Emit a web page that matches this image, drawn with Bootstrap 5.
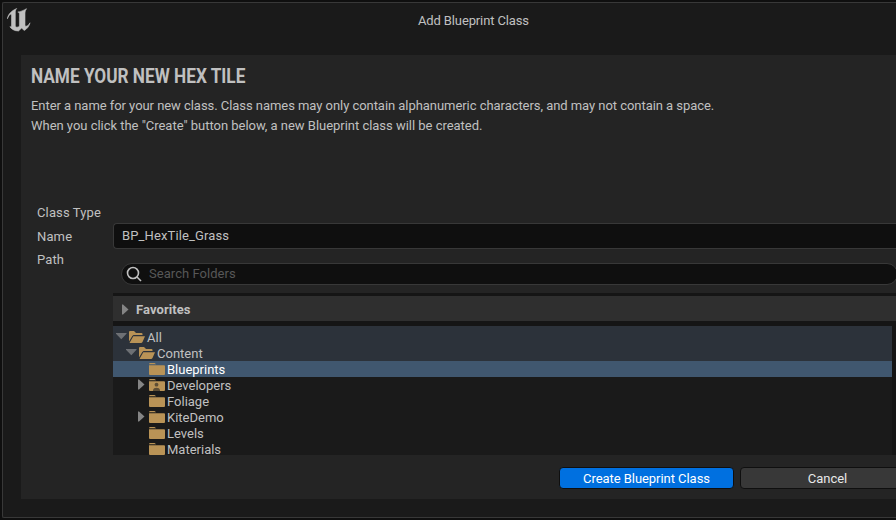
<!DOCTYPE html>
<html lang="en">
<head>
<meta charset="utf-8">
<title>Add Blueprint Class</title>
<link href="https://cdn.jsdelivr.net/npm/bootstrap@5.3.0/dist/css/bootstrap.min.css" rel="stylesheet">
<style>
body{background:#0f0f0f;color:#c0c0c0;font-family:Roboto,"Liberation Sans",sans-serif;font-size:13px;line-height:16px;letter-spacing:.13px;height:520px}
.window{margin:2px 0 0 2px;height:516px;width:894px;background:#1a1a1a;border:1px solid #383838;border-right:0;border-radius:2px 0 0 2px}
.titlebar{height:52px;padding:5px 0 0 4px}
.logo{width:24px;height:24px}
.caption{margin-left:387px;margin-top:5px;letter-spacing:-.13px}
.panel{margin-left:18px;height:444px;background:#242424}
.heading{font-size:21px;line-height:24px;font-weight:700;letter-spacing:0;transform:scaleX(.82);transform-origin:left;margin:9px 0 0 10px;white-space:nowrap;width:max-content}
.intro{line-height:20px;margin:8px 0 0 10px;white-space:nowrap;letter-spacing:-.05px}
.intro-second{letter-spacing:-.025px}
.form-zone{height:263px;margin-top:69px}
.labels{width:92px;padding-left:16px}
.label-row{height:24px}
.label-row + .label-row{height:23px}
.form-fields{padding-top:18px}
.name-box{height:26px;background:#0f0f0f;border:1px solid #383838;border-right:0;border-radius:4px 0 0 4px;padding:4px 8px}
.search-box{height:22px;width:777px;margin:14px 0 8px 8px;background:#0f0f0f;border:1px solid #383838;border-radius:11px;color:#575757;padding-left:4px;gap:7px;letter-spacing:.04px}
.picker-list{background:#151515;padding-top:3px}
.fav{height:25px;background:#2f2f2f;margin-bottom:5px;padding:3px 0 0 6px;gap:4px;letter-spacing:.08px}
.tree{width:779px;height:129px;background:#1a1a1a}
.tree-row{height:16px;line-height:17px;white-space:nowrap;letter-spacing:0}
.level-0{padding-left:2px}
.level-1{padding-left:12px}
.level-2{padding-left:22px}
.parent-rows{background:#2c323a;padding-top:3px}
.chosen{background:#40576f;color:#fff}
.tw{width:13px;height:16px;flex:none}
.fd{width:18px;height:16px;flex:none;margin-right:1px}
.footer-buttons{padding-left:538px;gap:6px;margin-top:-1px}
.ue-btn,.ue-btn:hover{height:22px;border:1px solid #0f0f0f;border-radius:4px;font-size:13px;line-height:16px;padding:3px 0 1px;color:#fff;letter-spacing:-.05px;flex:none;width:175px}
.ue-create,.ue-create:hover{background:#0070e0}
.ue-cancel,.ue-cancel:hover{background:#383838;color:#e8e8e8}
</style>
</head>
<body class="overflow-hidden m-0">
<svg class="d-none">
  <symbol id="right" viewBox="0 0 13 16"><path d="M3 2.500v10h1l5.500-5L4 2.500z" fill="#858585"/></symbol>
  <symbol id="down" viewBox="0 0 13 16"><path d="M1 4h10.500v.8l-5.200 5.400L1 4.800z" fill="#6d7074"/></symbol>
  <symbol id="closed" viewBox="0 0 18 16"><path d="M1 3.200Q1 2 2.200 2H6.500l1.700 1.200H1zM1 4.200h15q1 0 1 1V13q0 1-1 1H2q-1 0-1-1z" fill="#b99356"/></symbol>
  <symbol id="open" viewBox="0 0 18 16"><path d="M1 12.500V3q0-1 1-1h4l2 2h5.500q1 0 1 1v1H5.500L4.300 7z" fill="#b99356"/><path d="M1.500 14L5.300 7.200H17L14.500 13q-.4 1-1.500 1z" fill="#b99356"/></symbol>
  <symbol id="person" viewBox="0 0 18 16"><use href="#closed" width="18" height="16"/><circle cx="8.500" cy="7.700" r="1.900" fill="#5e4e35"/><path d="M5 14v-1.300Q5.500 10.700 8.500 10.700T12 12.700V14z" fill="#5e4e35"/></symbol>
</svg>
<main class="window">
  <header class="titlebar d-flex align-items-start">
    <svg class="logo" viewBox="0 0 24 24"><path d="M.4 10.800C1 6.500 4 3 9.700.5 8.400 2 8.300 3.200 8.300 5v12.200c0 1.300.7 2 1.600 2 1 0 1.900-.4 2.500-1.200V6.200c0-1.500-.5-2-1.600-2.100C13.500 3.600 16.500 2.500 19.500.7 18 3 18 4.500 18 6v10.700c0 1 .4 1.500 1.200 1.500 1.400 0 2.800-1.600 3.800-3.400-.8 3.700-3.200 6.400-5.900 7.700L14.700 20l-3.200 3C7 22.900 4.500 21 2.900 18.700c1.100.4 1.600 0 1.600-1.700V8.200c0-1.500-.4-2-1.200-1.800C2.200 6.800 1.200 8.700.4 10.800z" fill="#c0c0c0" stroke="#c0c0c0" stroke-width=".6"/></svg>
    <span class="caption">Add Blueprint Class</span>
  </header>
  <section class="panel overflow-hidden">
    <h1 class="heading">NAME YOUR NEW HEX TILE</h1>
    <p class="intro mb-0">Enter a name for your new class. Class names may only contain alphanumeric characters, and may not contain a space.<br><span class="intro-second">When you click the "Create" button below, a new Blueprint class will be created.</span></p>
    <div class="form-zone d-flex">
      <div class="labels flex-shrink-0">
        <div class="label-row">Class Type</div><div class="label-row">Name</div><div class="label-row">Path</div>
      </div>
      <div class="form-fields flex-grow-1 overflow-hidden">
        <div class="name-box">BP_HexTile_Grass</div>
        <div class="search-box d-flex align-items-center"><svg width="16" height="16" viewBox="0 0 16 16" fill="none" stroke="#c0c0c0" stroke-width="1.600"><circle cx="7" cy="7" r="5.500"/><path d="M11 11l4 4"/></svg><span>Search Folders</span></div>
        <div class="picker-list">
          <div class="fav d-flex align-items-center fw-bold"><svg class="tw"><use href="#right"/></svg>Favorites</div>
          <div class="tree overflow-hidden">
            <div class="parent-rows">
              <div class="tree-row level-0 d-flex"><svg class="tw"><use href="#down"/></svg><svg class="fd"><use href="#open"/></svg>All</div>
              <div class="tree-row level-1 d-flex"><svg class="tw"><use href="#down"/></svg><svg class="fd"><use href="#open"/></svg>Content</div>
            </div>
            <div class="tree-row level-2 d-flex chosen"><span class="tw"></span><svg class="fd"><use href="#closed"/></svg>Blueprints</div>
            <div class="tree-row level-2 d-flex"><svg class="tw"><use href="#right"/></svg><svg class="fd"><use href="#person"/></svg>Developers</div>
            <div class="tree-row level-2 d-flex"><span class="tw"></span><svg class="fd"><use href="#closed"/></svg>Foliage</div>
            <div class="tree-row level-2 d-flex"><svg class="tw"><use href="#right"/></svg><svg class="fd"><use href="#closed"/></svg>KiteDemo</div>
            <div class="tree-row level-2 d-flex"><span class="tw"></span><svg class="fd"><use href="#closed"/></svg>Levels</div>
            <div class="tree-row level-2 d-flex"><span class="tw"></span><svg class="fd"><use href="#closed"/></svg>Materials</div>
          </div>
        </div>
      </div>
    </div>
    <footer class="footer-buttons d-flex"><button class="btn ue-btn ue-create">Create Blueprint Class</button><button class="btn ue-btn ue-cancel">Cancel</button></footer>
  </section>
</main>
</body>
</html>
